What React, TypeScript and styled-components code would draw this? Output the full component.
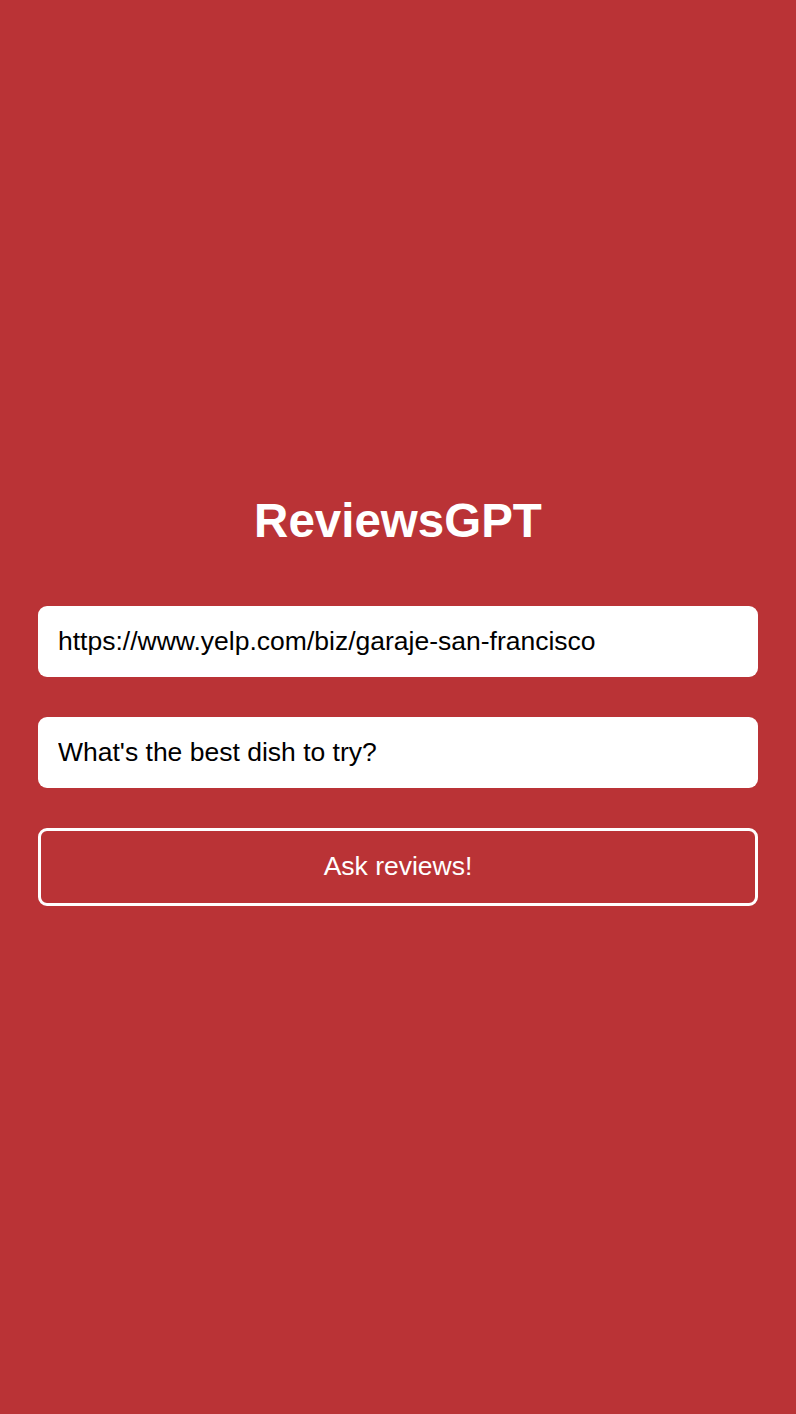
import styled, { createGlobalStyle } from "styled-components";

const GlobalStyle = createGlobalStyle`
  html, body {
    margin: 0;
    padding: 0;
    background: #ba3336;
    font-family: "Liberation Sans", Arial, Helvetica, sans-serif;
  }
  * {
    box-sizing: border-box;
  }
`;

const Page = styled.main`
  min-height: 100vh;
  display: flex;
  flex-direction: column;
  justify-content: center;
  padding: 0 38px 16px;
  background: #ba3336;
`;

const Title = styled.h1`
  margin: 0 0 58px;
  font-size: 47.5px;
  line-height: 55px;
  font-weight: 700;
  color: #fff;
  text-align: center;
`;

const Form = styled.form`
  display: flex;
  flex-direction: column;
  gap: 40px;
`;

const Field = styled.input`
  width: 100%;
  height: 71px;
  padding: 0 20px;
  border: none;
  border-radius: 9px;
  background: #fff;
  color: #000;
  font-family: inherit;
  font-size: 26.5px;
  outline: none;
`;

const AskButton = styled.button`
  width: 100%;
  height: 78px;
  border: 3px solid #fff;
  border-radius: 9px;
  background: transparent;
  color: #fff;
  font-family: inherit;
  font-size: 26.5px;
  cursor: pointer;
`;

const App = () => {
  return (
    <>
      <GlobalStyle />
      <Page>
        <Title>ReviewsGPT</Title>
        <Form onSubmit={(e) => e.preventDefault()}>
          <Field
            type="text"
            defaultValue="https://www.yelp.com/biz/garaje-san-francisco"
          />
          <Field type="text" defaultValue="What's the best dish to try?" />
          <AskButton type="submit">Ask reviews!</AskButton>
        </Form>
      </Page>
    </>
  );
};

export default App;
